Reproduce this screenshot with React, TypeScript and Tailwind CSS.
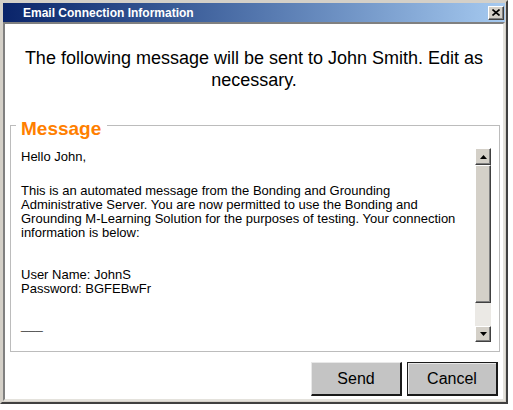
import React from 'react';

const raised =
  'shrink-0 border border-t-white border-l-white border-r-[#404040] border-b-[#404040] shadow-[inset_-1px_-1px_#808080] bg-[#d4d0c8]';

function ArrowUp() {
  return (
    <svg width="7" height="4" viewBox="0 0 7 4">
      <path d="M3.5 0 L7 4 L0 4 Z" fill="#000" />
    </svg>
  );
}

function ArrowDown() {
  return (
    <svg width="7" height="4" viewBox="0 0 7 4">
      <path d="M0 0 L7 0 L3.5 4 Z" fill="#000" />
    </svg>
  );
}

function Scrollbar() {
  return (
    <div className="ml-auto w-4 h-[194px] flex flex-col shrink-0">
      <div className={`${raised} h-[17px] flex items-center justify-center`}>
        <ArrowUp />
      </div>
      <div className={`${raised} h-[138px]`} />
      <div className="shrink-0 h-[23px] bg-[#ebe9e5]" />
      <div className={`${raised} h-4 flex items-center justify-center`}>
        <ArrowDown />
      </div>
    </div>
  );
}

export default function App() {
  return (
    <div className="w-[513px] h-[410px] bg-white font-['Liberation_Sans',Arial,sans-serif] text-black">
      <div className="w-[508px] h-[404px] flex flex-col p-px bg-[#d4d0c8] border-2 border-t-[#d4d0c8] border-l-[#d4d0c8] border-r-[#404040] border-b-[#404040]">
        {/* title bar */}
        <div className="h-[19px] shrink-0 flex items-center pl-5 pr-[1px] bg-linear-to-r from-[#0a246a] to-[#a6caf0]">
          <span className="text-white font-bold text-[12px] leading-none">Email Connection Information</span>
          <div className={`${raised} ml-auto w-4 h-[14px] flex items-center justify-center`}>
            <svg width="8" height="7" viewBox="0 0 8 7">
              <path d="M0.5 0.5 L7.5 6.5 M7.5 0.5 L0.5 6.5" stroke="#000" strokeWidth="1.6" />
            </svg>
          </div>
        </div>

        {/* client area */}
        <div className="flex-1 flex flex-col bg-white border-2 border-t-[#808080] border-l-[#808080] border-r-[#e4e2dc] border-b-[#e4e2dc]">
          <p className="pt-[23px] px-4 text-center text-[18px] leading-[22px]">
            The following message will be sent to John Smith. Edit as necessary.
          </p>

          <fieldset className="mt-[19px] ml-[5px] w-[490px] h-[242px] pl-[5px] border border-[#bcbcbc]">
            <legend className="pl-[5px] pr-[6px] pt-2 text-[19px] leading-[22px] font-bold text-[#ff7f00]">
              Message
            </legend>
            <div className="flex pt-2 pb-[9px] pl-[5px] pr-2">
              <div className="w-[446px] pt-[2px] text-[13px] leading-[14px]">
                <p>Hello John,</p>
                <p className="mt-5">
                  This is an automated message from the Bonding and Grounding Administrative Server. You are now
                  permitted to use the Bonding and Grounding M-Learning Solution for the purposes of testing. Your
                  connection information is below:
                </p>
                <p className="mt-[28px]">User Name: JohnS</p>
                <p>Password: BGFEBwFr</p>
                <p className="mt-[22px] text-[#444]">___</p>
              </div>
              <Scrollbar />
            </div>
          </fieldset>

          <div className="mt-[10px] pr-[5px] flex justify-end gap-[5px]">
            <button className="w-[91px] h-[34px] bg-[#c4c4c4] text-[16px] border border-t-[#e8e8e8] border-l-[#e8e8e8] border-r-2 border-b-2 border-r-[#1a1a1a] border-b-[#1a1a1a]">
              Send
            </button>
            <button className="w-[91px] h-[34px] bg-[#c4c4c4] text-[16px] border border-[#1a1a1a] border-r-2 border-b-2 shadow-[inset_1px_1px_#e8e8e8]">
              Cancel
            </button>
          </div>
        </div>
      </div>
    </div>
  );
}
